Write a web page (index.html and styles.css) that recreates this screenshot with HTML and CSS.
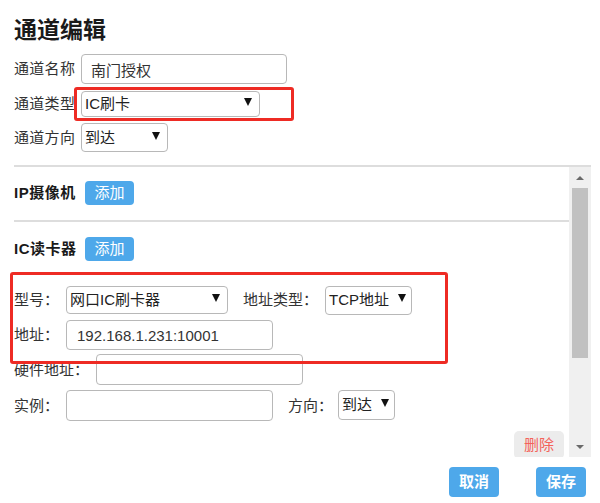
FILE: index.html
```html
<!DOCTYPE html>
<html lang="zh-CN">
<head>
<meta charset="utf-8">
<title>通道编辑</title>
<link rel="stylesheet" href="styles.css">
</head>
<body>
<div class="page">
  <h1 class="title">通道编辑</h1>

  <div class="top-form">
    <div class="row row-name">
      <label class="top-label">通道名称</label>
      <input class="text-input w-name" type="text" value="南门授权">
    </div>
    <div class="row row-type">
      <label class="top-label">通道类型</label>
      <div class="select w-type"><span class="select-text">IC刷卡</span><span class="caret"></span></div>
    </div>
    <div class="row row-dir">
      <label class="top-label">通道方向</label>
      <div class="select w-dir"><span class="select-text">到达</span><span class="caret"></span></div>
    </div>
  </div>

  <div class="scroll-box">
    <div class="scroll-content">
      <div class="section-head head-ip">
        <span class="section-title">IP摄像机</span>
        <button class="btn btn-add">添加</button>
      </div>
      <div class="divider"></div>
      <div class="section-head head-ic">
        <span class="section-title">IC读卡器</span>
        <button class="btn btn-add">添加</button>
      </div>

      <div class="frow frow-model">
        <label class="flabel">型号：</label>
        <div class="select w-model"><span class="select-text">网口IC刷卡器</span><span class="caret"></span></div>
        <label class="flabel flabel-gap">地址类型：</label>
        <div class="select w-addrtype"><span class="select-text">TCP地址</span><span class="caret"></span></div>
      </div>
      <div class="frow frow-addr">
        <label class="flabel">地址：</label>
        <input class="text-input w-field" type="text" value="192.168.1.231:10001">
      </div>
      <div class="frow frow-hw">
        <label class="flabel">硬件地址：</label>
        <input class="text-input w-field tall" type="text" value="">
      </div>
      <div class="frow frow-inst">
        <label class="flabel">实例：</label>
        <input class="text-input w-field tall" type="text" value="">
        <label class="flabel flabel-gap">方向：</label>
        <div class="select w-dir2"><span class="select-text">到达</span><span class="caret"></span></div>
      </div>
      <div class="del-row">
        <button class="btn btn-del">删除</button>
      </div>
    </div>
    <div class="scrollbar">
      <div class="sb-btn"><span class="arrow-up"></span></div>
      <div class="sb-thumb"></div>
      <div class="sb-space"></div>
      <div class="sb-btn"><span class="arrow-down"></span></div>
    </div>
  </div>

  <div class="footer">
    <button class="btn btn-primary">取消</button>
    <button class="btn btn-primary">保存</button>
  </div>

  <div class="mark mark-type"></div>
  <div class="mark mark-reader"></div>
</div>
</body>
</html>
```

FILE: styles.css
```css
html, body {
  margin: 0;
  padding: 0;
  background: #ffffff;
}

body {
  font-family: "Liberation Sans", "Noto Sans CJK SC", sans-serif;
  font-size: 15px;
  color: #333333;
}

.page {
  position: relative;
  width: 600px;
  height: 503px;
  box-sizing: border-box;
  padding: 0 14px;
  overflow: hidden;
}

.title {
  margin: 18px 0 0;
  height: 25px;
  line-height: 25px;
  font-size: 23px;
  font-weight: bold;
  color: #1a1a1a;
}

.top-form {
  display: flex;
  flex-direction: column;
}

.row {
  display: flex;
  align-items: center;
}

.row-name { margin-top: 11px; height: 30px; }
.row-type { margin-top: 7px; height: 26px; }
.row-dir  { margin-top: 6px; height: 29px; }

.top-label {
  width: 60px;
  margin-right: 7px;
  line-height: 20px;
  white-space: nowrap;
  letter-spacing: 0.3px;
}

.text-input {
  box-sizing: border-box;
  height: 30px;
  border: 1px solid #b8b8b8;
  border-radius: 4px;
  padding: 0 0 0 9px;
  font-family: "Liberation Sans", "Noto Sans CJK SC", sans-serif;
  font-size: 15px;
  color: #333333;
  background: #ffffff;
  outline: none;
}

.text-input.tall { height: 31px; }

.w-name { width: 206px; }
.w-field { width: 207px; padding-left: 10px; }

.select {
  box-sizing: border-box;
  display: flex;
  align-items: center;
  justify-content: space-between;
  height: 100%;
  border: 1px solid #b8b8b8;
  border-radius: 4px;
  padding: 0 7px 0 3px;
  background: #ffffff;
  color: #222222;
  white-space: nowrap;
}

.select-text {
  line-height: 20px;
}

.caret {
  width: 0;
  height: 0;
  border-left: 4px solid transparent;
  border-right: 4px solid transparent;
  border-top: 8px solid #111111;
  margin-top: -4px;
}

.w-type { width: 179px; }
.w-dir { width: 87px; }
.w-model { width: 162px; height: 28px; }
.w-addrtype { width: 87px; height: 29px; padding-right: 5px; }
.w-dir2 { width: 57px; height: 30px; padding-right: 5px; }

.scroll-box {
  display: flex;
  height: 290px;
  margin-top: 13px;
  margin-right: -5px;
  border-top: 2px solid #dddddd;
}

.scroll-content {
  flex: 1;
  overflow: hidden;
  display: flex;
  flex-direction: column;
}

.section-head {
  display: flex;
  align-items: center;
  height: 24px;
  flex-shrink: 0;
}

.head-ip { margin-top: 14px; }
.head-ic { margin-top: 15px; }

.section-title {
  width: 71px;
  font-weight: bold;
  color: #1a1a1a;
  line-height: 20px;
  letter-spacing: 0.5px;
  white-space: nowrap;
}

.btn {
  box-sizing: border-box;
  border: none;
  border-radius: 4px;
  padding: 0;
  font-family: "Liberation Sans", "Noto Sans CJK SC", sans-serif;
  font-size: 15px;
  cursor: pointer;
}

.btn-add {
  width: 49px;
  height: 24px;
  background: #4ea8ea;
  color: #ffffff;
  line-height: 24px;
}

.divider {
  flex-shrink: 0;
  height: 2px;
  margin-top: 15px;
  background: #dddddd;
}

.frow {
  display: flex;
  align-items: center;
  flex-shrink: 0;
}

.frow-model { margin-top: 25px; height: 28px; }
.frow-addr  { margin-top: 6px; height: 30px; }
.frow-hw    { margin-top: 4px; height: 31px; }
.frow-inst  { margin-top: 5px; height: 31px; }

.flabel {
  margin-right: 7px;
  line-height: 20px;
  white-space: nowrap;
}

.flabel-gap {
  margin-left: 15px;
}

.frow-inst .flabel-gap { margin-right: 5px; }
.frow-inst .select { height: 30px; margin-top: -1px; }

.del-row {
  display: flex;
  justify-content: flex-end;
  flex-shrink: 0;
  margin-top: 10px;
  padding-right: 5px;
}

.btn-del {
  width: 50px;
  height: 28px;
  background: #ececec;
  color: #f4635a;
  line-height: 26px;
  border-radius: 5px;
}

.scrollbar {
  width: 22px;
  flex-shrink: 0;
  display: flex;
  flex-direction: column;
  background: #f0f0f0;
}

.sb-btn {
  height: 21px;
  display: flex;
  align-items: center;
  justify-content: center;
  flex-shrink: 0;
}

.arrow-up {
  width: 0;
  height: 0;
  border-left: 4px solid transparent;
  border-right: 4px solid transparent;
  border-bottom: 4px solid #6a6a6a;
}

.arrow-down {
  width: 0;
  height: 0;
  border-left: 4px solid transparent;
  border-right: 4px solid transparent;
  border-top: 4px solid #6a6a6a;
}

.sb-thumb {
  height: 170px;
  margin: 0 3px;
  background: #c1c1c1;
  flex-shrink: 0;
}

.sb-space {
  flex: 1;
}

.footer {
  display: flex;
  justify-content: flex-end;
  gap: 37px;
  margin-top: 10px;
}

.btn-primary {
  width: 50px;
  height: 30px;
  background: #4ea8ea;
  color: #ffffff;
  font-weight: bold;
  line-height: 30px;
  border-radius: 4px;
}

.mark {
  position: absolute;
  box-sizing: border-box;
  border: 3px solid #ee2b24;
  border-radius: 3px;
  pointer-events: none;
}

.mark-type {
  left: 74px;
  top: 87px;
  width: 220px;
  height: 34px;
}

.mark-reader {
  left: 10px;
  top: 272px;
  width: 438px;
  height: 92px;
}
```
